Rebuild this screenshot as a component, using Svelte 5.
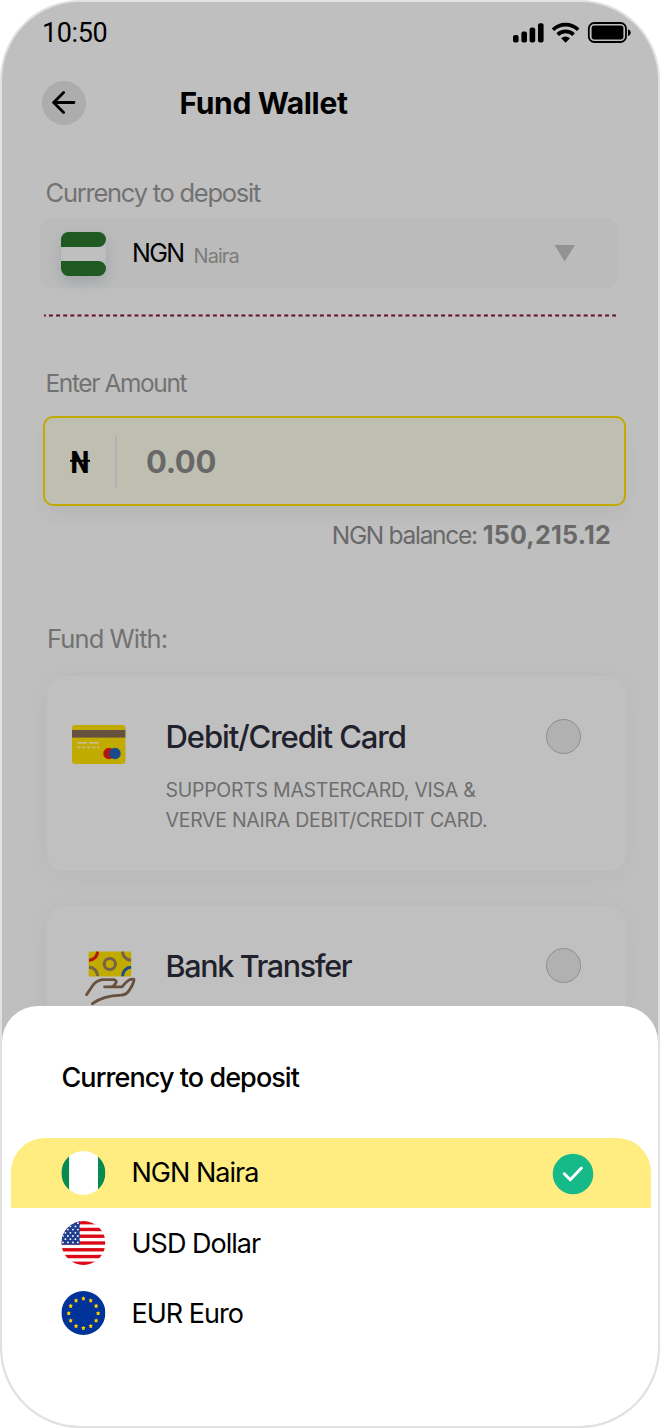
<script>
    const currencies = [
        { code: "NGN", name: "Naira" },
        { code: "USD", name: "Dollar" },
        { code: "EUR", name: "Euro" },
    ];

    let selected = $state("NGN");

    const current = $derived(currencies.find((c) => c.code === selected));

    // the twelve stars of the EU flag
    const euStars = Array.from({ length: 12 }, (_, i) => ({
        x: 22 + 14.7 * Math.sin((i * Math.PI) / 6),
        y: 22 - 14.7 * Math.cos((i * Math.PI) / 6),
    }));

    // staggered rows of stars on the US flag
    const usStars = [];
    for (let row = 0; row < 7; row++) {
        for (let col = 0; col < 4; col++) {
            usStars.push({ x: 1.5 + col * 5 + (row % 2) * 2.5, y: 2.2 + row * 3.2 });
        }
    }
</script>

<main class="phone">
    <div class="status">
        <span class="time">10:50</span>
        <svg class="status-icons" width="120" height="24" viewBox="0 0 120 24">
            <rect x="3" y="15" width="5.6" height="7.4" rx="2" />
            <rect x="11.4" y="11.4" width="5.6" height="11" rx="2" />
            <rect x="19.6" y="7.4" width="5.6" height="15" rx="2" />
            <rect x="28" y="3.2" width="5.6" height="19.2" rx="2" />
            <g fill="none" stroke="#000" stroke-width="3.6">
                <path d="M43 9.8a18 18 0 0 1 25.2 0" />
                <path d="M47.6 14.6a11.6 11.6 0 0 1 16 0" />
            </g>
            <path d="M51.2 18.2a6.6 6.6 0 0 1 8.8 0l-4.4 4.6z" />
            <rect x="78.8" y="3" width="37.2" height="19" rx="5.5" fill="none" stroke="#000" stroke-width="1.8" />
            <rect x="81.6" y="5.6" width="31.8" height="13.8" rx="2.6" />
            <path d="M118 9.2q2.8 1 2.8 3.4t-2.8 3.4z" />
        </svg>
    </div>

    <header>
        <button class="back" aria-label="Back">
            <svg width="24" height="24" viewBox="0 0 24 24">
                <path d="M22 11.5H1.8M11.6 1.6L1.6 11.5l10 10" />
            </svg>
        </button>
        <h1>Fund Wallet</h1>
    </header>

    <div class="label currency-label"><span>Currency to deposit</span></div>
    <div class="select">
        <div class="flag-tile">
            <i class="green"></i>
            <i class="pale"></i>
            <i class="green"></i>
        </div>
        <span class="select-code">{current.code}</span>
        <span class="select-name">{current.name}</span>
        <svg class="caret" width="22" height="18" viewBox="0 0 22 18">
            <path d="M.5 1h20.4L10.7 17.4z" />
        </svg>
    </div>
    <svg class="dashes" width="572" height="3" viewBox="0 0 572 3">
        <line x1="-2.2" y1="1.5" x2="572" y2="1.5" />
    </svg>

    <div class="label amount-label"><span>Enter Amount</span></div>
    <div class="amount">
        <div class="naira">
            <span>N</span>
            <svg width="20" height="24" viewBox="0 0 20 24">
                <path d="M0 11.8h20" />
            </svg>
        </div>
        <span class="value">0.00</span>
    </div>
    <div class="balance">
        <span class="balance-label">NGN balance:</span>
        <b>150,215.12</b>
    </div>

    <div class="label with-label"><span>Fund With:</span></div>
    <section class="card">
        <svg class="card-icon" width="54" height="40" viewBox="0 0 54 40">
            <rect x="0" y="0" width="53.4" height="39" rx="3" fill="#c2ab00" />
            <rect x="0" y="5" width="53.4" height="7.6" fill="#66513f" />
            <path d="M5.3 17.8h9.6M17 17.8h9.6" stroke="#c5bd8b" stroke-width="1.8" />
            <path d="M5.3 22.3h22" stroke="#c5bd8b" stroke-width="1.8" stroke-dasharray="3 2" />
            <circle cx="37" cy="28.5" r="5.7" fill="#b11611" />
            <circle cx="43" cy="28.5" r="5.7" fill="#194b8b" />
        </svg>
        <div class="card-text">
            <h2>Debit/Credit Card</h2>
            <p>SUPPORTS MASTERCARD, VISA &amp;<br />VERVE NAIRA DEBIT/CREDIT CARD.</p>
        </div>
        <div class="radio"></div>
    </section>
    <section class="card second">
        <svg class="bank-icon" width="52" height="56" viewBox="0 0 52 56">
            <rect x="3.6" y="0.4" width="42.6" height="25" rx="1.5" fill="#c2ab00" />
            <g fill="none" stroke="#75614a" stroke-width="3">
                <circle cx="24.8" cy="13" r="5.6" />
                <path d="M37.5 .6a8.8 8.8 0 0 0 8.6 8.6" />
                <path d="M4 16.3a8.6 8.6 0 0 1 8.6 8.8" />
                <path d="M4 9.2A8.8 8.8 0 0 0 12.6 .6" stroke="#b11611" />
                <path d="M37.5 25.2a8.8 8.8 0 0 1 8.6-8.9" stroke="#194b8b" />
            </g>
            <g fill="none" stroke="#66513f" stroke-width="2.8" stroke-linecap="round" stroke-linejoin="round">
                <path d="M1.6 43.6L7.4 35q3.6-5.6 10-6.4H29q3.6 1.2 1.2 4.2-1 2.800-4.200 3H19.5h17.5l5-5.4q3-3 7-2-.2 4-4.6 10.600-2.600 4.800-8.400 5.200-9 .2-15.600 2.200-7 2-13 6.200" />
            </g>
        </svg>
        <div class="card-text">
            <h2>Bank Transfer</h2>
        </div>
        <div class="radio"></div>
    </section>

    <div class="sheet">
        <h3><span>Currency to deposit</span></h3>
        <div class="options">
            {#each currencies as c}
                <button
                    class="option"
                    class:selected={c.code === selected}
                    onclick={() => (selected = c.code)}
                >
                    <svg class="flag" width="45" height="44" viewBox="0 0 45 44">
                        <clipPath id={"clip-" + c.code}>
                            <circle cx="22" cy="22" r="22" />
                        </clipPath>
                        <g transform="translate(.4 0)" clip-path={"url(#clip-" + c.code + ")"}>
                            {#if c.code === "NGN"}
                                <rect width="7.8" height="44" fill="#078a51" />
                                <rect x="7.8" width="28.8" height="44" fill="#fff" />
                                <rect x="36.6" width="7.4" height="44" fill="#078a51" />
                            {:else if c.code === "USD"}
                                <rect width="44" height="44" fill="#fff" />
                                {#each [0, 1, 2, 3, 4, 5, 6] as i}
                                    <rect y={i * 6.77} width="44" height="3.39" fill="#dc0a17" />
                                {/each}
                                <rect width="18.4" height="23.7" fill="#1f3f8f" />
                                {#each usStars as s}
                                    <circle cx={s.x} cy={s.y} r="0.9" fill="#fff" />
                                {/each}
                            {:else}
                                <rect width="44" height="44" fill="#039" />
                                {#each euStars as s}
                                    <path
                                        transform="translate({s.x} {s.y})"
                                        d="M0-2l.7 1.2 1.5.1-1 1.2.3 1.500H-1.500l.3-1.500-1-1.200 1.500-.1z"
                                        fill="#ffcc00"
                                    />
                                {/each}
                            {/if}
                        </g>
                    </svg>
                    <span class="name">{c.code} {c.name}</span>
                    {#if c.code === selected}
                        <svg class="check" width="42" height="42" viewBox="0 0 42 42">
                            <circle cx="21" cy="21" r="20.3" fill="#16ba88" />
                            <path d="M12.3 20.8l6 6L29.4 15" />
                        </svg>
                    {/if}
                </button>
            {/each}
        </div>
    </div>
</main>

<style>
    :global(body) {
        background: #fff;
    }

    .phone {
        box-sizing: border-box;
        position: relative;
        width: 660px;
        height: 1428px;
        overflow: hidden;
        border: 2px solid #e1e1e1;
        border-radius: 80px;
        background: #bfbfbf;
        font-family: Inter, "Liberation Sans", sans-serif;
        white-space: nowrap;
        color: #000;
    }

    h1,
    h2,
    h3,
    p {
        margin: 0;
    }

    button {
        border: none;
        padding: 0;
        font: inherit;
        color: inherit;
        text-align: left;
    }

    svg {
        display: block;
        flex: none;
    }

    .status {
        display: flex;
        align-items: center;
        justify-content: space-between;
        height: 62px;
        padding: 0 28px 0 40px;
    }

    .time {
        font-family: Roboto, sans-serif;
        font-size: 27px;
        letter-spacing: -0.4px;
    }

    .status-icons {
        margin-top: -2px;
        overflow: visible;
    }

    header {
        display: flex;
        align-items: center;
        gap: 93.5px;
        height: 44px;
        margin-top: 17px;
        padding-left: 40px;
    }

    .back {
        display: flex;
        align-items: center;
        justify-content: center;
        width: 44px;
        height: 44px;
        border-radius: 50%;
        background: #adadad;
    }

    .back svg {
        margin-top: -1px;
    }

    .back path {
        fill: none;
        stroke: #000;
        stroke-width: 2.8;
        stroke-linecap: round;
        stroke-linejoin: round;
    }

    h1 {
        font-size: 30px;
        font-weight: 700;
        letter-spacing: -0.35px;
    }

    .label {
        display: flex;
        align-items: center;
        height: 40px;
        padding-left: 43.5px;
        font-size: 25.5px;
        letter-spacing: -1.25px;
        color: #727272;
    }

    .currency-label {
        height: 38px;
        margin-top: 48px;
    }

    .select {
        display: flex;
        align-items: center;
        width: 578px;
        height: 70px;
        margin: 7px 0 0 38px;
        border-radius: 12px;
        background: #bbb;
    }

    .flag-tile {
        display: flex;
        flex-direction: column;
        width: 45px;
        height: 44px;
        margin: 2px 0 0 21px;
        border-radius: 10px;
        background: #b8bbbf;
        box-shadow: 0 6px 14px rgba(110, 125, 140, 0.35);
    }

    .flag-tile i {
        flex: 1;
    }

    .flag-tile .green {
        background: #205a22;
        border-radius: 8px 8px 8px 0;
    }

    .flag-tile .green:last-child {
        border-radius: 0 8px 8px 8px;
    }

    .flag-tile .pale {
        background: #bfbfbf;
        border-radius: 8px;
    }

    .select-code {
        margin-left: 26px;
        font-size: 25px;
        letter-spacing: -1.6px;
    }

    .select-name {
        margin: 5px 0 0 10px;
        font-size: 20px;
        letter-spacing: -0.95px;
        color: #7c7c7c;
    }

    .caret {
        margin: 0 42px 0 auto;
        fill: #929292;
    }

    .dashes {
        margin: 25.5px 0 0 42px;
        stroke: #650f22;
        stroke-width: 2;
        stroke-dasharray: 4 3.13;
    }

    .amount-label {
        margin-top: 46.5px;
        font-size: 24.5px;
        letter-spacing: -1.4px;
    }

    .amount {
        box-sizing: border-box;
        display: flex;
        align-items: center;
        width: 583px;
        height: 90px;
        margin: 13px 0 0 41px;
        border: 2px solid #c2a900;
        border-radius: 10px;
        background: #bebeb1;
        box-shadow: 0 12px 18px rgba(0, 0, 0, 0.035);
    }

    .naira {
        display: grid;
        place-items: center;
        box-sizing: border-box;
        width: 72px;
        height: 53px;
        border-right: 2px solid #b1b1b1;
        font-family: Roboto, sans-serif;
        font-size: 31px;
        font-weight: 800;
    }

    .naira > * {
        grid-area: 1 / 1;
    }

    .naira span {
        margin-top: 2px;
        transform: scaleX(0.86);
    }

    .naira path {
        stroke: #000;
        stroke-width: 2;
    }

    .value {
        margin-left: 29px;
        font-size: 31px;
        font-weight: 700;
        letter-spacing: -0.3px;
        color: #686868;
    }

    .balance {
        display: flex;
        align-items: center;
        justify-content: flex-end;
        gap: 6px;
        height: 40px;
        margin-top: 9px;
        padding-right: 47px;
        font-size: 25px;
        color: #696969;
    }

    .balance-label {
        font-size: 24.5px;
        letter-spacing: -1.3px;
    }

    .balance b {
        letter-spacing: 0.25px;
    }

    .with-label {
        height: 38px;
        margin-top: 64px;
        padding-left: 45px;
        letter-spacing: -0.9px;
    }

    .card {
        box-sizing: border-box;
        display: flex;
        align-items: flex-start;
        width: 579px;
        height: 195px;
        margin: 19px 0 0 45px;
        padding: 39px 45px 0 25px;
        border-radius: 18px;
        background: #c0c0c0;
        box-shadow: 0 4px 30px rgba(0, 0, 0, 0.04);
    }

    .second {
        margin-top: 35px;
        padding-top: 38px;
    }

    .card-icon {
        margin-top: 10px;
    }

    .bank-icon {
        margin: 7px 0 0 13px;
    }

    .card-text {
        flex: 1;
        margin-left: 39.5px;
        color: #1f212d;
    }

    h2 {
        font-size: 31px;
        line-height: 44px;
        font-weight: 500;
        letter-spacing: -1.08px;
    }

    .second .card-text {
        margin-left: 28.5px;
    }

    .second h2 {
        font-size: 30.5px;
        letter-spacing: -1.35px;
    }

    p {
        margin-top: 16px;
        font-size: 19.5px;
        line-height: 30px;
        letter-spacing: -0.27px;
        color: #6e6e6e;
    }

    .radio {
        box-sizing: border-box;
        width: 35px;
        height: 35px;
        margin-top: 4px;
        border: 1px solid #8e8e8e;
        border-radius: 50%;
        background: #b1b1b1;
    }

    /* bottom sheet over the form */
    .sheet {
        position: absolute;
        left: 0;
        right: 0;
        bottom: 0;
        height: 420px;
        border-radius: 36px 36px 0 0;
        background: #fff;
    }

    h3 {
        display: flex;
        align-items: center;
        height: 142px;
        padding-left: 59.5px;
        font-size: 27px;
        font-weight: 500;
        letter-spacing: -0.93px;
    }

    .options {
        display: flex;
        flex-direction: column;
        margin: -10px 7px 0 9px;
    }

    .option {
        display: flex;
        align-items: center;
        height: 70.3px;
        padding: 0 57px 0 50px;
        background: none;
    }

    .option.selected {
        border-radius: 34px 34px 0 0;
        background: #ffed81;
    }

    .flag {
        margin-top: -1px;
    }

    .name {
        margin-left: 25.5px;
        font-size: 27px;
        letter-spacing: -1px;
    }

    .selected .name {
        margin-top: -1px;
    }

    .check {
        margin: 2px 0 0 auto;
    }

    .check path {
        fill: none;
        stroke: #fff;
        stroke-width: 3;
        stroke-linecap: round;
        stroke-linejoin: round;
    }
</style>
